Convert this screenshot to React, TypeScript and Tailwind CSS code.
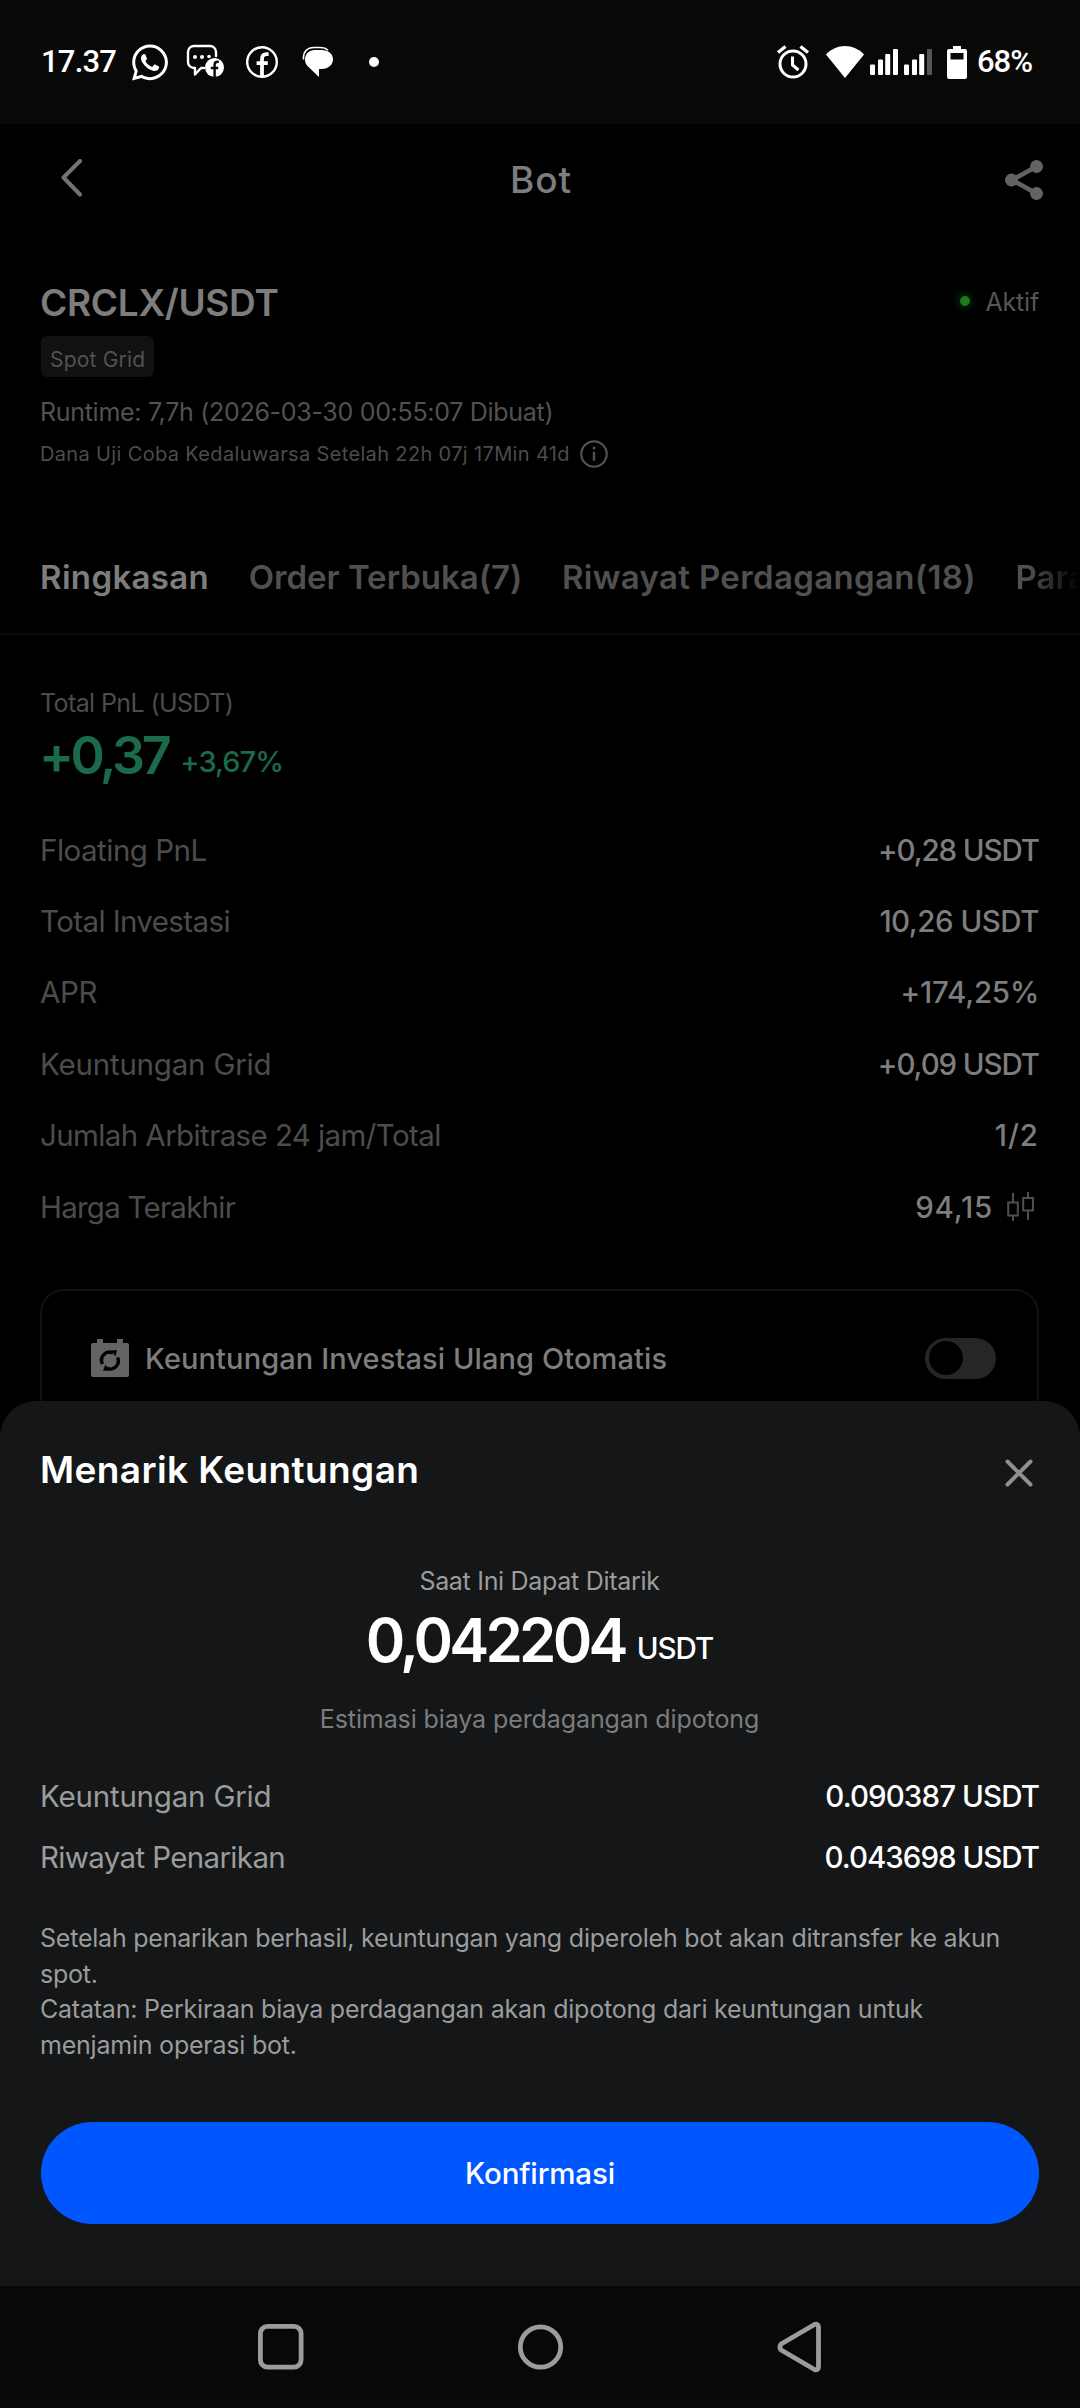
import React from 'react';
import { FaWhatsapp } from 'react-icons/fa';

interface Stat {
  label: string;
  value: string;
  labelClass: string;
  valueClass: string;
  chart?: boolean;
}

const stats: Stat[] = [
  { label: 'Floating PnL', value: '+0,28 USDT', labelClass: 'tracking-[-0.5px]', valueClass: 'tracking-[-1.1px]' },
  { label: 'Total Investasi', value: '10,26 USDT', labelClass: 'tracking-[-0.6px]', valueClass: 'tracking-[-0.5px]' },
  { label: 'APR', value: '+174,25%', labelClass: 'tracking-[-0.4px]', valueClass: 'tracking-[-0.2px]' },
  { label: 'Keuntungan Grid', value: '+0,09 USDT', labelClass: 'tracking-[-0.2px]', valueClass: 'tracking-[-1.1px]' },
  { label: 'Jumlah Arbitrase 24 jam/Total', value: '1/2', labelClass: 'tracking-[-0.6px]', valueClass: 'tracking-[1px]' },
  { label: 'Harga Terakhir', value: '94,15', labelClass: 'tracking-[-0.75px]', valueClass: 'tracking-[0.8px]', chart: true },
];

const withdrawals = [
  { label: 'Keuntungan Grid', value: '0.090387 USDT', labelClass: 'tracking-[-0.2px]', valueClass: 'tracking-[-0.9px]' },
  { label: 'Riwayat Penarikan', value: '0.043698 USDT', labelClass: 'tracking-[-0.65px]', valueClass: 'tracking-[-1px]' },
];

const MessageBadgeIcon = () => (
  <svg width="40" height="36" viewBox="0 0 40 36" fill="none">
    <path
      d="M30 12V8a6 6 0 0 0-6-6H8a6 6 0 0 0-6 6v10a6 6 0 0 0 6 6h1v6.5l6-6.5h3"
      stroke="#fff"
      strokeWidth="2.4"
      strokeLinejoin="round"
      strokeLinecap="round"
    />
    <circle cx="9" cy="13" r="2" fill="#fff" />
    <circle cx="16" cy="13" r="2" fill="#fff" />
    <circle cx="23" cy="12.5" r="1.8" fill="#fff" />
    <circle cx="28.5" cy="23.5" r="9.5" fill="#fff" />
    <path d="M28.6 33v-12.2c0-2 1.2-3 3-3h1.2M24.8 24h7.4" stroke="#080808" strokeWidth="2.4" />
  </svg>
);

const FacebookIcon = () => (
  <svg width="34" height="34" viewBox="0 0 34 34" fill="none">
    <circle cx="17" cy="17" r="14.8" stroke="#fff" strokeWidth="2.4" />
    <path d="M17 31V14.2c0-3.4 1.6-5.1 4.4-5.1h2.2M11.6 18.2h11.2" stroke="#fff" strokeWidth="3.8" />
  </svg>
);

const ChatIcon = () => (
  <svg width="32" height="32" viewBox="0 0 32 32" fill="none">
    <path d="M1.6 13.5C.4 5.8 5.5 1.5 12 1.5h6c4 0 6.2.9 8 2.7" stroke="#fff" strokeWidth="1.6" />
    <path d="M13 4h6.5C26.5 4 31 8 31 13.3S26.5 23 19.8 23H17v8L6.8 21.2C4.3 19.3 3 16.8 3 13.5 3 8 7 4 13 4z" fill="#fff" />
  </svg>
);

const AlarmIcon = () => (
  <svg width="34" height="36" viewBox="0 0 34 36" fill="none" stroke="#fff">
    <circle cx="17" cy="20" r="13" strokeWidth="3" />
    <path d="M16.5 12.5v8.5l6 5" strokeWidth="3" />
    <path d="M2 8.5l7.500-6M32 8.5l-7.500-6" strokeWidth="3.4" />
  </svg>
);

const WifiIcon = () => (
  <svg width="38" height="32" viewBox="0 0 38 32" fill="#fff">
    <path d="M0 8.5C5 3 12 0 19 0s14 3 19 8.5L19 32z" />
  </svg>
);

const SignalIcon = ({ weak }: { weak?: boolean }) => (
  <svg width="28" height="26" viewBox="0 0 28 26" fill="#fff">
    <rect x="0" y="15.5" width="5" height="10.5" rx="1" />
    <rect x="8" y="10.5" width="5" height="15.5" rx="1" />
    <rect x="15.2" y="5" width="5" height="21" rx="1" />
    <rect x="23" y="0" width="5" height="26" rx="1" fill={weak ? '#555' : '#fff'} />
  </svg>
);

const BatteryIcon = () => (
  <svg width="20" height="33" viewBox="0 0 20 33" fill="none">
    <path d="M6 0h8v3h4a2 2 0 0 1 2 2v26a2 2 0 0 1-2 2H2a2 2 0 0 1-2-2V5a2 2 0 0 1 2-2h4z" fill="#fff" />
    <rect x="3.5" y="7" width="13" height="6.5" fill="#080808" />
  </svg>
);

const ShareIcon = () => (
  <svg width="38" height="40" viewBox="0 0 38 40" fill="#636363">
    <path d="M31.5 6.5L7 20l24.5 13.5" stroke="#636363" strokeWidth="4.6" fill="none" />
    <circle cx="31.5" cy="6.5" r="6.5" />
    <circle cx="6.5" cy="20" r="6.5" />
    <circle cx="31.5" cy="33.5" r="6.5" />
  </svg>
);

const InfoIcon = () => (
  <svg width="28" height="28" viewBox="0 0 28 28" fill="none" stroke="#525252">
    <circle cx="14" cy="14" r="12.7" strokeWidth="2.2" />
    <path d="M14 11.7v9" strokeWidth="2.4" />
    <circle cx="14" cy="8" r="1.5" fill="#525252" stroke="none" />
  </svg>
);

const CandleIcon = () => (
  <svg width="28" height="30" viewBox="0 0 28 30" fill="none" stroke="#4f4f4f" strokeWidth="2">
    <rect x="1.2" y="10.5" width="9.6" height="13" />
    <path d="M6 1v9.5M6 23.5V29" />
    <rect x="16.2" y="6" width="9.8" height="12.5" />
    <path d="M21 0v6M21 18.5V28" />
  </svg>
);

const ReinvestIcon = () => (
  <svg width="38" height="38" viewBox="0 0 38 38" fill="none">
    <path d="M6 0h6v4h14V0h6v4h4a2 2 0 0 1 2 2v30a2 2 0 0 1-2 2H2a2 2 0 0 1-2-2V6a2 2 0 0 1 2-2h4z" fill="#636465" />
    <path d="M11.5 25a8 8 0 0 1 10.5-11M26.5 18.5A8 8 0 0 1 15.5 29" stroke="#000" strokeWidth="3.4" />
    <path d="M20.5 11.5l5.500-.5-1.500 6.500zM17.5 32l-5.500-.5 2.500-6z" fill="#000" />
  </svg>
);

const StatusBar = () => (
  <div className="flex h-[124px] shrink-0 items-center justify-between bg-[#080808] pr-[48px] pl-[41px] font-[Roboto] text-[31px] font-medium text-white">
    <div className="flex h-full items-center">
      <span className="w-[91px] tracking-[-0.8px]">17.37</span>
      <FaWhatsapp className="h-[41px] w-9" />
      <div className="ml-[18px]"><MessageBadgeIcon /></div>
      <div className="ml-[19px]"><FacebookIcon /></div>
      <div className="ml-[23px]"><ChatIcon /></div>
      <span className="ml-[35px] size-2.5 rounded-full bg-white" />
    </div>
    <div className="flex h-full items-center">
      <AlarmIcon />
      <div className="ml-[16px]"><WifiIcon /></div>
      <div className="ml-[6px]"><SignalIcon /></div>
      <div className="ml-[6px]"><SignalIcon weak /></div>
      <div className="mr-[10px] ml-[15px]"><BatteryIcon /></div>
      <span className="tracking-[-1px]">68%</span>
    </div>
  </div>
);

const StatRow = ({ stat }: { stat: Stat }) => (
  <div className="flex h-[71.4px] items-center justify-between text-[29.5px]">
    <span className={`text-[#4c4c4c] ${stat.labelClass}`}>{stat.label}</span>
    <div className="flex items-center">
      <span className={`font-medium text-[#7d7d7d] ${stat.valueClass}`}>{stat.value}</span>
      {stat.chart && <div className="mr-1 ml-3.5"><CandleIcon /></div>}
    </div>
  </div>
);

const BotPage = () => (
  <div className="flex flex-1 flex-col overflow-hidden bg-black">
    <div className="flex h-28 items-center justify-between pr-[37px] pl-[61px]">
      <svg className="-mt-1" width="22" height="38" viewBox="0 0 22 38" fill="none" stroke="#737373" strokeWidth="4" strokeLinecap="round" strokeLinejoin="round">
        <path d="M19 2L2.5 18.5 19 35.5" />
      </svg>
      <h1 className="mr-1.5 text-[37px] font-medium tracking-[1px] text-[#7d7d7d]">Bot</h1>
      <ShareIcon />
    </div>

    <div className="mt-[45px] flex h-11 items-center justify-between pr-[41px] pl-10">
      <h2 className="text-[37px] font-semibold tracking-[-0.3px] text-[#7d7d7d]">CRCLX/USDT</h2>
      <div className="flex items-center gap-4 text-[25px] tracking-[-0.2px] text-[#565656]">
        <span className="-mt-1 size-2.5 rounded-full bg-[#1f7a1c] shadow-[0_0_6px_4px_#041a05]" />
        Aktif
      </div>
    </div>

    <div className="flex flex-col items-start px-10">
      <span className="mt-[11px] ml-px flex h-[41px] items-center rounded-md bg-[#111] px-[9px] pt-1.5 text-[21px] tracking-[0.2px] text-[#525252]">Spot Grid</span>
      <p className="mt-[18px] h-[34px] text-[25px] leading-[34px] tracking-[-0.3px] text-[#525252]">Runtime: 7,7h (2026-03-30 00:55:07 Dibuat)</p>
      <div className="mt-[8px] flex h-[34px] items-center gap-2.5 text-[20px] tracking-[0.35px] text-[#4c4c4c]">
        Dana Uji Coba Kedaluwarsa Setelah 22h 07j 17Min 41d
        <InfoIcon />
      </div>
    </div>

    <div className="mt-[49px] flex h-[115px] shrink-0 items-center gap-[39.5px] border-b-2 border-[#0b0b0b] pt-0.5 pl-10 text-[33px] font-semibold whitespace-nowrap text-[#505050]">
      <span className="tracking-[0.35px] text-[#7d7d7d]">Ringkasan</span>
      <span>Order Terbuka(7)</span>
      <span className="tracking-[0.35px]">Riwayat Perdagangan(18)</span>
      <span className="w-[66px] overflow-hidden mask-r-from-20%">Parameter</span>
    </div>

    <div className="pr-[41px] pl-10">
      <p className="mt-[51px] h-[34px] text-[25px] leading-[34px] tracking-[-0.6px] text-[#4c4c4c]">Total PnL (USDT)</p>
      <div className="mt-1.5 -ml-px flex h-[60px] items-baseline gap-3 text-[#1b6b4b]">
        <span className="text-[52px] leading-[60px] font-semibold tracking-[-3.4px]">+0,37</span>
        <span className="relative -top-0.5 text-[29px] font-medium tracking-[-0.9px]">+3,67%</span>
      </div>
      <div className="mt-7">
        {stats.map((stat) => <StatRow key={stat.label} stat={stat} />)}
      </div>

      <div className="mt-[47px] h-[160px] rounded-t-3xl border-2 border-[#101010]">
        <div className="flex h-[134px] items-center pr-[41px] pl-[49px]">
          <ReinvestIcon />
          <span className="ml-4 text-[29px] font-medium tracking-[0.1px] text-[#7d7d7d]">Keuntungan Investasi Ulang Otomatis</span>
          <div className="ml-auto h-[41px] w-[71px] rounded-full bg-[#252628] p-[3.5px]">
            <div className="size-[34px] rounded-full bg-black" />
          </div>
        </div>
      </div>
    </div>
  </div>
);

const WithdrawSheet = () => (
  <div className="absolute inset-x-0 bottom-[122px] h-[885px] rounded-t-[36px] bg-[#141617] pr-[41px] pl-10 text-white">
    <div className="flex h-[137px] items-center justify-between">
      <h2 className="text-[37px] font-semibold tracking-[0.4px]">Menarik Keuntungan</h2>
      <svg className="mt-1.5 mr-[6px]" width="28" height="28" viewBox="0 0 28 28" stroke="#8f9091" strokeWidth="4" strokeLinecap="round">
        <path d="M2.5 2.5l23 23M25.5 2.5l-23 23" />
      </svg>
    </div>

    <div className="mt-[26px] flex flex-col items-center">
      <p className="text-[25px] leading-[34px] tracking-[-0.3px] text-[#9b9c9c]">Saat Ini Dapat Ditarik</p>
      <div className="mt-3 flex h-[60px] items-baseline gap-3">
        <span className="text-[60px] leading-[60px] font-semibold tracking-[-3.8px]">0,042204</span>
        <span className="relative -top-[3px] text-[29.5px] font-medium tracking-[-1px]">USDT</span>
      </div>
      <p className="mt-8 text-[25px] leading-[34px] tracking-[-0.1px] text-[#7b7c7d]">Estimasi biaya perdagangan dipotong</p>
    </div>

    <div className="mt-[30px] text-[29.5px]">
      {withdrawals.map((item) => (
        <div key={item.label} className="flex h-[61px] items-center justify-between">
          <span className={`text-[#9b9c9c] ${item.labelClass}`}>{item.label}</span>
          <span className={`font-medium ${item.valueClass}`}>{item.value}</span>
        </div>
      ))}
    </div>

    <div className="mt-[33px] text-[25px] leading-[35.6px] tracking-[-0.22px] whitespace-nowrap text-[#9b9c9c]">
      <p>Setelah penarikan berhasil, keuntungan yang diperoleh bot akan ditransfer ke akun<br />spot.</p>
      <p>Catatan: Perkiraan biaya perdagangan akan dipotong dari keuntungan untuk<br />menjamin operasi bot.</p>
    </div>

    <button className="mt-[59px] ml-px flex h-[102px] w-[998px] items-center justify-center rounded-full bg-[#0057ff] text-[29.5px] font-medium tracking-[-0.15px]">
      Konfirmasi
    </button>
  </div>
);

const NavBar = () => (
  <div className="flex h-[122px] shrink-0 items-center bg-[#080808] pl-[256px]">
    <svg width="568" height="52" viewBox="0 0 568 52" fill="none" stroke="#9c9c9c" strokeWidth="4.8">
      <rect x="4.4" y="5.4" width="40.7" height="40.7" rx="7" />
      <circle cx="284.5" cy="26" r="20.2" />
      <path d="M558.5 3.5L526 22.5c-2.8 1.8-2.8 5.3 0 7l32.5 19c2 1 4-.2 4-2.5V6c0-2.3-2-3.5-4-2.5z" strokeLinejoin="round" />
    </svg>
  </div>
);

export default function App() {
  return (
    <div className="relative flex h-[2408px] w-[1080px] flex-col overflow-hidden bg-black font-[Inter,sans-serif]">
      <StatusBar />
      <BotPage />
      <WithdrawSheet />
      <NavBar />
    </div>
  );
}
